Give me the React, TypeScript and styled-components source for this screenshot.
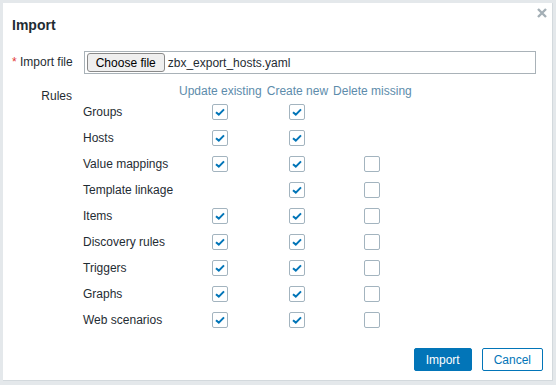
import styled, { createGlobalStyle } from 'styled-components';

const GlobalStyle = createGlobalStyle`
    html, body {
        margin: 0;
        padding: 0;
        background-color: #e4e8eb;
        font-family: "Liberation Sans", Arial, sans-serif;
        font-size: 12px;
        color: #1f2c33;
    }
`;

const Backdrop = styled.div`
    box-sizing: border-box;
    width: 556px;
    height: 385px;
    padding: 3px 3px 4px 3px;
`;

const Dialog = styled.div`
    position: relative;
    box-sizing: border-box;
    display: flex;
    flex-direction: column;
    height: 100%;
    padding: 13px 9px 9px 9px;
    background-color: #fff;
    border: 1px solid #d3d9dd;
    border-top: none;
    border-left: none;
`;

const Title = styled.h4`
    margin: 0;
    font-size: 14px;
    font-weight: bold;
    line-height: 18px;
    color: #1f2c33;
`;

const Close = styled.button`
    position: absolute;
    top: 5px;
    right: 5px;
    display: flex;
    padding: 0;
    border: none;
    background: none;
    cursor: pointer;
`;

const Form = styled.div`
    display: flex;
    flex-direction: column;
    gap: 10px;
    margin-top: 20px;
`;

const FormRow = styled.div`
    display: flex;
    gap: 11px;
`;

const Label = styled.div<{ $top?: number }>`
    flex: 0 0 60px;
    padding-top: ${(p) => p.$top ?? 0}px;
    text-align: right;
    line-height: 16px;
    white-space: nowrap;
`;

const Asterisk = styled.span`
    color: #e33734;
`;

const FileBox = styled.div`
    box-sizing: border-box;
    display: flex;
    align-items: center;
    gap: 3px;
    width: 452px;
    height: 23px;
    margin-top: -3px;
    padding: 0 2px;
    border: 1px solid #a9b2b8;
    font-size: 12px;
`;

const ChooseButton = styled.span`
    box-sizing: border-box;
    display: flex;
    align-items: center;
    height: 19px;
    padding: 0 8px;
    background-color: #efefef;
    border: 1px solid #8a8a8a;
    border-radius: 3px;
    font-size: 12px;
    color: #000;
`;

const RulesGrid = styled.div`
    display: grid;
    grid-template-columns: 91px max-content max-content max-content;
    grid-template-rows: 15px;
    grid-auto-rows: 26px;
    column-gap: 5px;
    align-items: center;
`;

const Header = styled.div`
    line-height: 15px;
    color: #5d8cab;
    white-space: nowrap;
`;

const RuleName = styled.div`
    line-height: 16px;
    white-space: nowrap;
`;

const Cell = styled.div`
    display: flex;
    justify-content: center;
`;

const Box = styled.span`
    box-sizing: border-box;
    display: flex;
    align-items: center;
    justify-content: center;
    width: 16px;
    height: 16px;
    background-color: #fff;
    border: 1px solid #a3b4bf;
    border-radius: 2px;
`;

const Footer = styled.div`
    display: flex;
    justify-content: flex-end;
    gap: 10px;
    margin-top: auto;
`;

const Button = styled.button<{ $primary?: boolean }>`
    box-sizing: border-box;
    height: 23px;
    padding: 0 11px;
    font-family: "Liberation Sans", Arial, sans-serif;
    font-size: 12px;
    border: 1px solid #0275b8;
    border-radius: 2px;
    background-color: ${(p) => (p.$primary ? '#0275b8' : '#fff')};
    color: ${(p) => (p.$primary ? '#fff' : '#0275b8')};
    cursor: pointer;
`;

type Rule = { name: string; update?: boolean; create?: boolean; remove?: boolean };

const rules: Rule[] = [
    { name: 'Groups', update: true, create: true },
    { name: 'Hosts', update: true, create: true },
    { name: 'Value mappings', update: true, create: true, remove: false },
    { name: 'Template linkage', create: true, remove: false },
    { name: 'Items', update: true, create: true, remove: false },
    { name: 'Discovery rules', update: true, create: true, remove: false },
    { name: 'Triggers', update: true, create: true, remove: false },
    { name: 'Graphs', update: true, create: true, remove: false },
    { name: 'Web scenarios', update: true, create: true, remove: false },
];

function Checkbox({ checked }: { checked?: boolean }) {
    if (checked === undefined) return <Cell />;
    return (
        <Cell>
            <Box>
                {checked && (
                    <svg width="10" height="8" viewBox="0 0 10 8">
                        <path d="M1 4.2 L3.8 6.6 L9 1.4" fill="none" stroke="#0275b8" strokeWidth="2" />
                    </svg>
                )}
            </Box>
        </Cell>
    );
}

function App() {
    return (
        <Backdrop>
            <GlobalStyle />
            <Dialog>
                <Title>Import</Title>
                <Close>
                    <svg width="10" height="10" viewBox="0 0 10 10">
                        <path d="M1 1 L9 9 M9 1 L1 9" stroke="#a4afb6" strokeWidth="2.4" />
                    </svg>
                </Close>
                <Form>
                    <FormRow>
                        <Label>
                            <Asterisk>*</Asterisk> Import file
                        </Label>
                        <FileBox>
                            <ChooseButton>Choose file</ChooseButton>
                            zbx_export_hosts.yaml
                        </FileBox>
                    </FormRow>
                    <FormRow>
                        <Label $top={4}>Rules</Label>
                        <RulesGrid>
                            <div />
                            <Header>Update existing</Header>
                            <Header>Create new</Header>
                            <Header>Delete missing</Header>
                            {rules.map((rule) => (
                                <>
                                    <RuleName key={rule.name}>{rule.name}</RuleName>
                                    <Checkbox checked={rule.update} />
                                    <Checkbox checked={rule.create} />
                                    <Checkbox checked={rule.remove} />
                                </>
                            ))}
                        </RulesGrid>
                    </FormRow>
                </Form>
                <Footer>
                    <Button $primary>Import</Button>
                    <Button>Cancel</Button>
                </Footer>
            </Dialog>
        </Backdrop>
    );
}

export default App;
